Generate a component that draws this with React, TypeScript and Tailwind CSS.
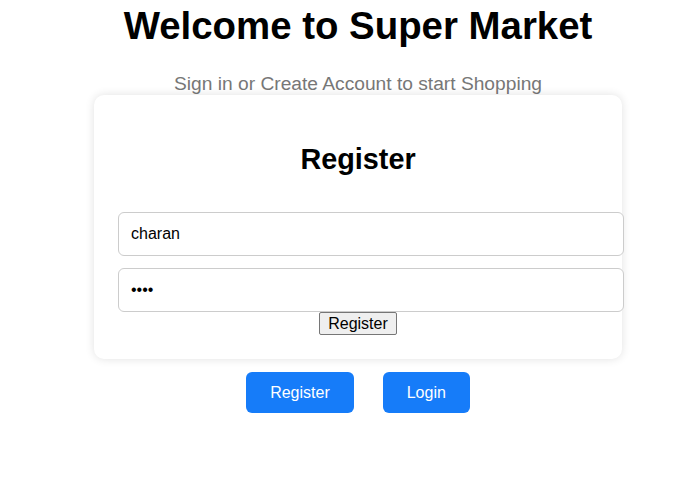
export default function App() {
  return (
    <div className="min-h-screen bg-white pl-[36px] flex flex-col items-center font-['Liberation_Sans',Arial,sans-serif] text-black">
      <h1 className="mt-[4px] text-[38.4px] leading-[44px] font-bold">Welcome to Super Market</h1>
      <p className="mt-[25px] text-[19.2px] leading-[22px] text-[#777777]">Sign in or Create Account to start Shopping</p>

      <div className="w-[528px] p-6 bg-white rounded-[10px] shadow-[0_0_10px_rgba(0,0,0,0.12)] flex flex-col items-center">
        <h2 className="mt-[24px] text-[28.8px] leading-[32px] font-bold">Register</h2>
        <div className="w-full mt-[37px] flex flex-col gap-[12px]">
          <input
            type="text"
            defaultValue="charan"
            className="w-[506px] h-[44px] px-3 text-base border border-[#cccccc] rounded-[6px] outline-none bg-white"
          />
          <input
            type="password"
            defaultValue="1234"
            className="w-[506px] h-[44px] px-3 text-base border border-[#cccccc] rounded-[6px] outline-none bg-white"
          />
        </div>
        <button className="h-[23px] px-[8px] text-base leading-[18px] bg-[#efefef] border border-[#767676] rounded-[2px]">
          Register
        </button>
      </div>

      <div className="mt-[13px] flex gap-[29px]">
        <button className="h-[41px] px-6 text-base text-white bg-[#167cf9] rounded-[6px]">Register</button>
        <button className="h-[41px] px-6 text-base text-white bg-[#167cf9] rounded-[6px]">Login</button>
      </div>
    </div>
  );
}
